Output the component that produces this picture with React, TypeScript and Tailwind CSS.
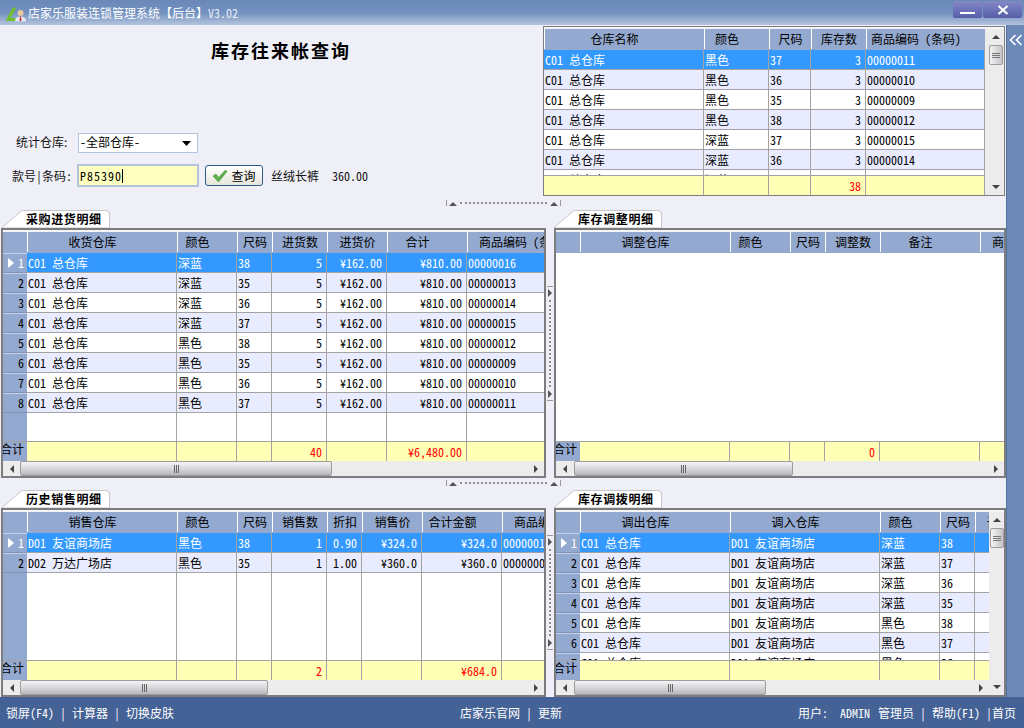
const sans = "font-['Noto_Sans_CJK_SC','Liberation_Sans',sans-serif]";
// half-width glyphs of the CJK face: 6px a char at 12px, like the old bitmap font
const latin = "[font-feature-settings:'hwid'] whitespace-pre";

type Col = { w: number; t: string; a?: 's' | 'c' | 'l'; r?: boolean };

function T({ s }: { s: string }) {
  const parts = s.split(/([\x20-\x7e¥]+)/).filter(Boolean);
  return (
    <span className="whitespace-pre">
      {parts.map((p, i) =>
        /^[\x20-\x7e¥]+$/.test(p) ? (
          <span key={i} className={latin}>
            {p}
          </span>
        ) : (
          <span key={i}>{p}</span>
        ),
      )}
    </span>
  );
}

function Tab({ label }: { label: string }) {
  return (
    <div className="relative h-5 w-[110px] ml-[1px] shrink-0">
      <svg className="absolute inset-0" width="110" height="20" viewBox="0 0 110 20">
        <path d="M0.5 20 L21 2.5 H104 Q108.5 2.5 108.5 7 V20 Z" fill="#ffffff" stroke="#c4c6cc" strokeWidth="1" />
      </svg>
      <div className="relative pl-[25px] pt-[2px] text-[12px] leading-[18px] font-bold text-black tracking-[0.6px] whitespace-nowrap">
        {label}
      </div>
    </div>
  );
}

function Arrow({ d, className }: { d: 'l' | 'r' | 'u' | 'd'; className?: string }) {
  const pts = { l: '6,1 6,9 2,5', r: '2,1 2,9 6,5', u: '1,7 9,7 5,3', d: '1,3 9,3 5,7' }[d];
  return (
    <svg width={d === 'l' || d === 'r' ? 8 : 10} height={10} className={className}>
      <polygon points={pts} fill="#444" />
    </svg>
  );
}

function HBar({ left, width }: { left: number; width: number }) {
  return (
    <div className="h-[15px] shrink-0 flex items-center bg-[#ececec] min-w-0">
      <div className="w-[17px] flex justify-center shrink-0">
        <Arrow d="l" />
      </div>
      <div
        className="h-[15px] shrink-0 rounded-[2px] border border-[#9c9c9c] bg-gradient-to-b from-[#f4f4f6] via-[#d8d8dc] to-[#b8b8bc] flex items-center justify-center gap-[1px]"
        style={{ marginLeft: left, width }}
      >
        <i className="w-[1px] h-[8px] bg-[#666]" />
        <i className="w-[1px] h-[8px] bg-[#666]" />
        <i className="w-[1px] h-[8px] bg-[#666]" />
      </div>
      <div className="flex-1" />
      <div className="w-[17px] flex justify-center shrink-0">
        <Arrow d="r" />
      </div>
    </div>
  );
}

function VBar({ wide = false }: { wide?: boolean }) {
  return (
    <div className={`${wide ? 'w-[19px] items-end pr-[1px]' : 'w-[15px] items-center'} shrink-0 bg-[#ececec] flex flex-col`}>
      <div className="h-[16px] w-[14px] flex items-center justify-center">
        <Arrow d="u" />
      </div>
      <div className="w-[14px] h-[20px] rounded-[2px] border border-[#9c9c9c] bg-gradient-to-r from-[#f4f4f6] to-[#c4c4c8] flex flex-col items-center justify-center gap-[1px]">
        <i className="w-[8px] h-[1px] bg-[#777]" />
        <i className="w-[8px] h-[1px] bg-[#777]" />
        <i className="w-[8px] h-[1px] bg-[#777]" />
      </div>
      <div className="flex-1" />
      <div className="h-[16px] w-[14px] flex items-center justify-center">
        <Arrow d="d" />
      </div>
    </div>
  );
}

function Grid({
  cols,
  rows,
  foot,
  indicator = true,
  empty = false,
  vbar = false,
  hbar,
  thin = false,
}: {
  cols: Col[];
  rows: string[][];
  foot: Record<number, string>;
  indicator?: boolean;
  empty?: boolean;
  vbar?: boolean;
  hbar?: { left: number; width: number };
  thin?: boolean;
}) {
  const cells = (fn: (c: Col, i: number) => React.ReactNode) => cols.map((c, i) => fn(c, i));
  return (
    <div
      className={`flex-1 min-h-0 min-w-0 flex bg-[#f4f5f9] border-[#7d7d7d] ${
        thin ? 'border pt-[2px]' : 'border-2 pt-[2px] ml-[1px] first:ml-0'
      }`}
    >
      <div className="flex-1 min-w-0 flex flex-col overflow-hidden">
        {/* header */}
        <div className="flex h-[21px] shrink-0 bg-[#94a9cf] text-black">
          {indicator && <div className="w-[24px] shrink-0" />}
          {cells((c) => (
            <div
              key={c.t}
              style={{ width: c.w }}
              className={`shrink-0 h-[20px] border-l border-white flex items-center whitespace-nowrap overflow-hidden ${
                c.a === 'l' ? 'pl-[11px]' : c.a === 's' ? 'justify-center pr-[20px]' : 'justify-center'
              }`}
            >
              <T s={c.t} />
            </div>
          ))}
        </div>
        {/* body */}
        <div className="flex-1 min-h-0 flex flex-col overflow-hidden bg-white">
          {rows.map((row, ri) => {
            const sel = ri === 0;
            const bg = sel ? 'bg-[#3399ff] text-white' : ri % 2 === 1 ? 'bg-[#e9ebfe] text-black' : 'bg-white text-black';
            return (
              <div key={ri} className={`flex h-[20px] shrink-0 ${bg}`}>
                {indicator && (
                  <div className="w-[24px] shrink-0 bg-[#94a9cf] border-b border-t border-t-[#c5d1e6] border-b-[#7f93b8] flex items-center justify-end pr-[3px] text-black">
                    {sel && (
                      <svg width="8" height="10" className="mr-[3px]">
                        <polygon points="1,0 1,10 7,5" fill="#ffffff" />
                      </svg>
                    )}
                    <span className={`${latin} ${sel ? 'text-white' : ''}`}>{ri + 1}</span>
                  </div>
                )}
                {cells((c, i) => (
                  <div
                    key={c.t}
                    style={{ width: c.w }}
                    className={`shrink-0 h-[20px] border-r border-b border-[#a3a3a3] flex items-center overflow-hidden whitespace-nowrap ${
                      c.r ? 'justify-end pr-[4px]' : 'pl-[1px]'
                    }`}
                  >
                    <T s={row[i] ?? ''} />
                  </div>
                ))}
              </div>
            );
          })}
          {/* space under the last row */}
          {!empty && (
            <div className="flex flex-1">
              {indicator && <div className="w-[24px] shrink-0 bg-[#94a9cf]" />}
              {cells((c) => (
                <div key={c.t} style={{ width: c.w }} className="shrink-0 border-r border-[#a3a3a3]" />
              ))}
            </div>
          )}
        </div>
        {/* sum row */}
        <div className="flex h-[20px] shrink-0 bg-[#ffffb5] border-t border-[#a3a3a3] overflow-visible">
          {indicator && (
            <div className="w-[24px] shrink-0 bg-[#94a9cf] text-black flex items-center justify-end relative">
              <span className="absolute right-[3px] -top-[1px] whitespace-nowrap">合计</span>
            </div>
          )}
          {cells((c, i) => (
            <div
              key={c.t}
              style={{ width: c.w }}
              className="shrink-0 border-r border-[#a3a3a3] flex items-center justify-end pr-[4px] text-[#ff0000] whitespace-nowrap"
            >
              {foot[i] && <T s={foot[i]} />}
            </div>
          ))}
        </div>
        {hbar && <HBar left={hbar.left} width={hbar.width} />}
      </div>
      {vbar && <VBar wide={thin} />}
    </div>
  );
}

function HSplit() {
  return (
    <div className="h-[10px] shrink-0 flex justify-center">
      <div className="w-[115px] flex items-center justify-between border-x border-[#9a9a9a] h-[6px] mt-[2px] px-[2px]">
        <svg width="8" height="5"><polygon points="0,5 8,5 4,1" fill="#555" /></svg>
        <div className="flex-1 mx-[3px] border-t-2 border-dotted border-[#8e8e8e]" />
        <svg width="8" height="5"><polygon points="0,5 8,5 4,1" fill="#555" /></svg>
      </div>
    </div>
  );
}

function VSplit() {
  return (
    <div className="w-[8px] shrink-0 flex flex-col justify-center items-center">
      <div className="h-[115px] w-[6px] flex flex-col items-center justify-between border-y border-[#9a9a9a] py-[2px]">
        <svg width="5" height="8"><polygon points="0,0 0,8 4,4" fill="#555" /></svg>
        <div className="flex-1 my-[3px] border-l-2 border-dotted border-[#8e8e8e]" />
        <svg width="5" height="8"><polygon points="0,0 0,8 4,4" fill="#555" /></svg>
      </div>
    </div>
  );
}

const topCols: Col[] = [
  { w: 160, t: '仓库名称', a: 's' },
  { w: 65, t: '颜色', a: 's' },
  { w: 42, t: '尺码' },
  { w: 55, t: '库存数', r: true },
  { w: 119, t: '商品编码 (条码)', a: 's' },
];
const topRows = [
  ['C01 总仓库', '黑色', '37', '3', '00000011'],
  ['C01 总仓库', '黑色', '36', '3', '00000010'],
  ['C01 总仓库', '黑色', '35', '3', '00000009'],
  ['C01 总仓库', '黑色', '38', '3', '00000012'],
  ['C01 总仓库', '深蓝', '37', '3', '00000015'],
  ['C01 总仓库', '深蓝', '36', '3', '00000014'],
  ['C01 总仓库', '深蓝', '35', '3', '00000013'],
];

const buyCols: Col[] = [
  { w: 150, t: '收货仓库', a: 's' },
  { w: 60, t: '颜色', a: 's' },
  { w: 35, t: '尺码' },
  { w: 55, t: '进货数', r: true },
  { w: 60, t: '进货价', r: true },
  { w: 80, t: '合计', a: 's', r: true },
  { w: 90, t: '商品编码 (条码)', a: 'l' },
];
const buyRows = [
  ['C01 总仓库', '深蓝', '38', '5', '¥162.00', '¥810.00', '00000016'],
  ['C01 总仓库', '深蓝', '35', '5', '¥162.00', '¥810.00', '00000013'],
  ['C01 总仓库', '深蓝', '36', '5', '¥162.00', '¥810.00', '00000014'],
  ['C01 总仓库', '深蓝', '37', '5', '¥162.00', '¥810.00', '00000015'],
  ['C01 总仓库', '黑色', '38', '5', '¥162.00', '¥810.00', '00000012'],
  ['C01 总仓库', '黑色', '35', '5', '¥162.00', '¥810.00', '00000009'],
  ['C01 总仓库', '黑色', '36', '5', '¥162.00', '¥810.00', '00000010'],
  ['C01 总仓库', '黑色', '37', '5', '¥162.00', '¥810.00', '00000011'],
];

const adjustCols: Col[] = [
  { w: 150, t: '调整仓库', a: 's' },
  { w: 60, t: '颜色', a: 's' },
  { w: 35, t: '尺码' },
  { w: 55, t: '调整数', r: true },
  { w: 100, t: '备注', a: 's' },
  { w: 60, t: '商品编码', a: 'l' },
];

const saleCols: Col[] = [
  { w: 150, t: '销售仓库', a: 's' },
  { w: 60, t: '颜色', a: 's' },
  { w: 35, t: '尺码' },
  { w: 55, t: '销售数', r: true },
  { w: 35, t: '折扣', r: true },
  { w: 60, t: '销售价', r: true },
  { w: 80, t: '合计金额', a: 's', r: true },
  { w: 90, t: '商品编码', a: 'l' },
];
const saleRows = [
  ['D01 友谊商场店', '黑色', '38', '1', '0.90', '¥324.0', '¥324.0', '00000012'],
  ['D02 万达广场店', '黑色', '35', '1', '1.00', '¥360.0', '¥360.0', '00000009'],
];

const moveCols: Col[] = [
  { w: 150, t: '调出仓库', a: 's' },
  { w: 150, t: '调入仓库', a: 's' },
  { w: 60, t: '颜色', a: 's' },
  { w: 35, t: '尺码' },
  { w: 40, t: '调拨数', a: 'l' },
];
const moveRows = [
  ['C01 总仓库', 'D01 友谊商场店', '深蓝', '38'],
  ['C01 总仓库', 'D01 友谊商场店', '深蓝', '37'],
  ['C01 总仓库', 'D01 友谊商场店', '深蓝', '36'],
  ['C01 总仓库', 'D01 友谊商场店', '深蓝', '35'],
  ['C01 总仓库', 'D01 友谊商场店', '黑色', '38'],
  ['C01 总仓库', 'D01 友谊商场店', '黑色', '37'],
  ['C01 总仓库', 'D01 友谊商场店', '黑色', '36'],
];

function TitleBar() {
  return (
    <div className="h-[25px] shrink-0 flex items-start bg-gradient-to-b from-[#6a89b9] via-[#7391bf] to-[#b3c3dc] text-white">
      <svg width="24" height="22" viewBox="0 0 24 22" className="ml-[4px] mt-[2px] shrink-0">
        <path d="M1.5 19 L9 5 L12 6.5 L6.5 16 H14 V19 Z" fill="#6fbf2f" />
        <circle cx="16.5" cy="11" r="3" fill="#e8c8a0" />
        <path d="M11 19.5 Q11 14.5 16.5 14.5 Q22 14.5 22 19.5 Z" fill="#e8e8f0" />
        <path d="M16 14.5 H17 L17.5 19 H15.5 Z" fill="#c03030" />
      </svg>
      <div className="mt-[5px] leading-[16px] whitespace-nowrap">
        店家乐服装连锁管理系统【后台】
        <span className={`${latin} text-[#e8edf6]`}>V3.02</span>
      </div>
      <div className="flex-1" />
      <div className="flex mr-[2px] mt-[1px] gap-[1px]">
        <div className="w-[29px] h-[17px] bg-gradient-to-b from-[#8488c6] to-[#565ea8] rounded-b-[2px] flex items-center justify-center">
          <i className="w-[15px] h-[2px] bg-white mt-[7px]" />
        </div>
        <div className="w-[39px] h-[17px] bg-gradient-to-b from-[#8488c6] to-[#565ea8] rounded-b-[2px] flex items-center justify-center">
          <svg width="12" height="10" viewBox="0 0 12 10">
            <path d="M1.5 1 L10.5 9 M10.5 1 L1.5 9" stroke="#ffffff" strokeWidth="2" />
          </svg>
        </div>
      </div>
    </div>
  );
}

function QueryForm() {
  return (
    <div className="flex-1 min-w-0 flex flex-col">
      <div className="mt-[12px] h-[24px] pl-[211px] text-[18px] leading-[24px] font-bold tracking-[2px] text-black whitespace-nowrap">
        库存往来帐查询
      </div>
      <div className="mt-[71px] flex items-center pl-[16px] h-[20px]">
        <div className="w-[62px] shrink-0 whitespace-nowrap -mt-[2px]">统计仓库:</div>
        <div className="w-[120px] h-[20px] bg-white border border-[#b4c4de] flex items-center justify-between pl-[1px] pr-[6px] text-black">
          <div className="-mt-[2px]"><T s="-全部仓库-" /></div>
          <svg width="9" height="5"><polygon points="0,0 9,0 4.5,5" fill="#000" /></svg>
        </div>
      </div>
      <div className="mt-[11px] flex items-center pl-[12px] h-[23px]">
        <div className="w-[65px] shrink-0 whitespace-nowrap">
          <T s="款号|条码:" />
        </div>
        <div className="w-[122px] h-[23px] bg-[#ffffc0] border-2 border-[#b4c4de] flex items-center pl-[1px] text-black">
          <span className={`${latin} tracking-[1px]`}>P85390</span>
          <i className="w-[1px] h-[14px] bg-black" />
        </div>
        <button className="ml-[6px] w-[58px] h-[21px] rounded-[3px] border border-[#2a5a8c] bg-gradient-to-b from-white to-[#e6e6da] flex items-center justify-center gap-[3px] text-black">
          <svg width="16" height="14" viewBox="0 0 16 14">
            <path d="M1 7 L4 5 L6.5 8.5 L13.5 1 L15 2.5 L6.5 13 Z" fill="#5bb04a" stroke="#3d8a35" strokeWidth="0.5" />
          </svg>
          查询
        </button>
        <div className="ml-[8px] mt-[1px] whitespace-nowrap">丝绒长裤</div>
        <div className="ml-[13px] mt-[1px]"><T s="360.00" /></div>
      </div>
    </div>
  );
}

export default function App() {
  return (
    <div className={`w-[1024px] h-[728px] flex flex-col overflow-hidden bg-[#eff0f7] text-[12px] leading-[16px] text-[#111] ${sans}`}>
      <TitleBar />
      <div className="flex-1 min-h-0 flex">
        <div className="w-[1006px] shrink-0 flex flex-col">
          <div className="h-[173px] shrink-0 flex pt-[1px] pb-[2px]">
            <QueryForm />
            <div className="w-[462px] shrink-0 flex mr-[1px]">
              <Grid thin cols={topCols} rows={topRows} foot={{ 3: '38' }} indicator={false} vbar />
            </div>
          </div>
          <HSplit />
          <div className="h-[270px] shrink-0 flex">
            <div className="w-[546px] shrink-0 flex flex-col">
              <Tab label="采购进货明细" />
              <Grid cols={buyCols} rows={buyRows} foot={{ 3: '40', 5: '¥6,480.00' }} hbar={{ left: 0, width: 312 }} />
            </div>
            <VSplit />
            <div className="w-[452px] shrink-0 flex flex-col">
              <div className="-ml-[2px]"><Tab label="库存调整明细" /></div>
              <div className="flex-1 min-h-0 flex">
                <Grid cols={adjustCols} rows={[]} foot={{ 3: '0' }} empty hbar={{ left: 1, width: 219 }} />
              </div>
            </div>
          </div>
          <HSplit />
          <div className="h-[209px] shrink-0 flex">
            <div className="w-[546px] shrink-0 flex flex-col">
              <Tab label="历史销售明细" />
              <Grid cols={saleCols} rows={saleRows} foot={{ 3: '2', 6: '¥684.0' }} hbar={{ left: 0, width: 248 }} />
            </div>
            <VSplit />
            <div className="w-[452px] shrink-0 flex flex-col">
              <div className="-ml-[2px]"><Tab label="库存调拨明细" /></div>
              <div className="flex-1 min-h-0 flex">
                <Grid cols={moveCols} rows={moveRows} foot={{}} vbar hbar={{ left: 1, width: 192 }} />
              </div>
            </div>
          </div>
        </div>
        <div className="flex-1 bg-[#6c89b8] border-l border-[#54709f] flex justify-center pt-[9px]">
          <svg width="14" height="12" viewBox="0 0 14 12">
            <path d="M6.5 1 L1.5 6 L6.5 11 M12.5 1 L7.5 6 L12.5 11" fill="none" stroke="#ffffff" strokeWidth="1.6" />
          </svg>
        </div>
      </div>
      <div className="h-[31px] shrink-0 flex items-center bg-[#446295] text-white px-[6px] whitespace-nowrap">
        <div className="w-[454px] shrink-0">
          <T s="锁屏(F4) | 计算器 | 切换皮肤" />
        </div>
        <div>
          <T s="店家乐官网 | 更新" />
        </div>
        <div className="flex-1 text-right pr-[2px]">
          <T s="用户:  ADMIN " />
          <span className="ml-[2px]"><T s="管理员 | 帮助(F1) |首页" /></span>
        </div>
      </div>
    </div>
  );
}
